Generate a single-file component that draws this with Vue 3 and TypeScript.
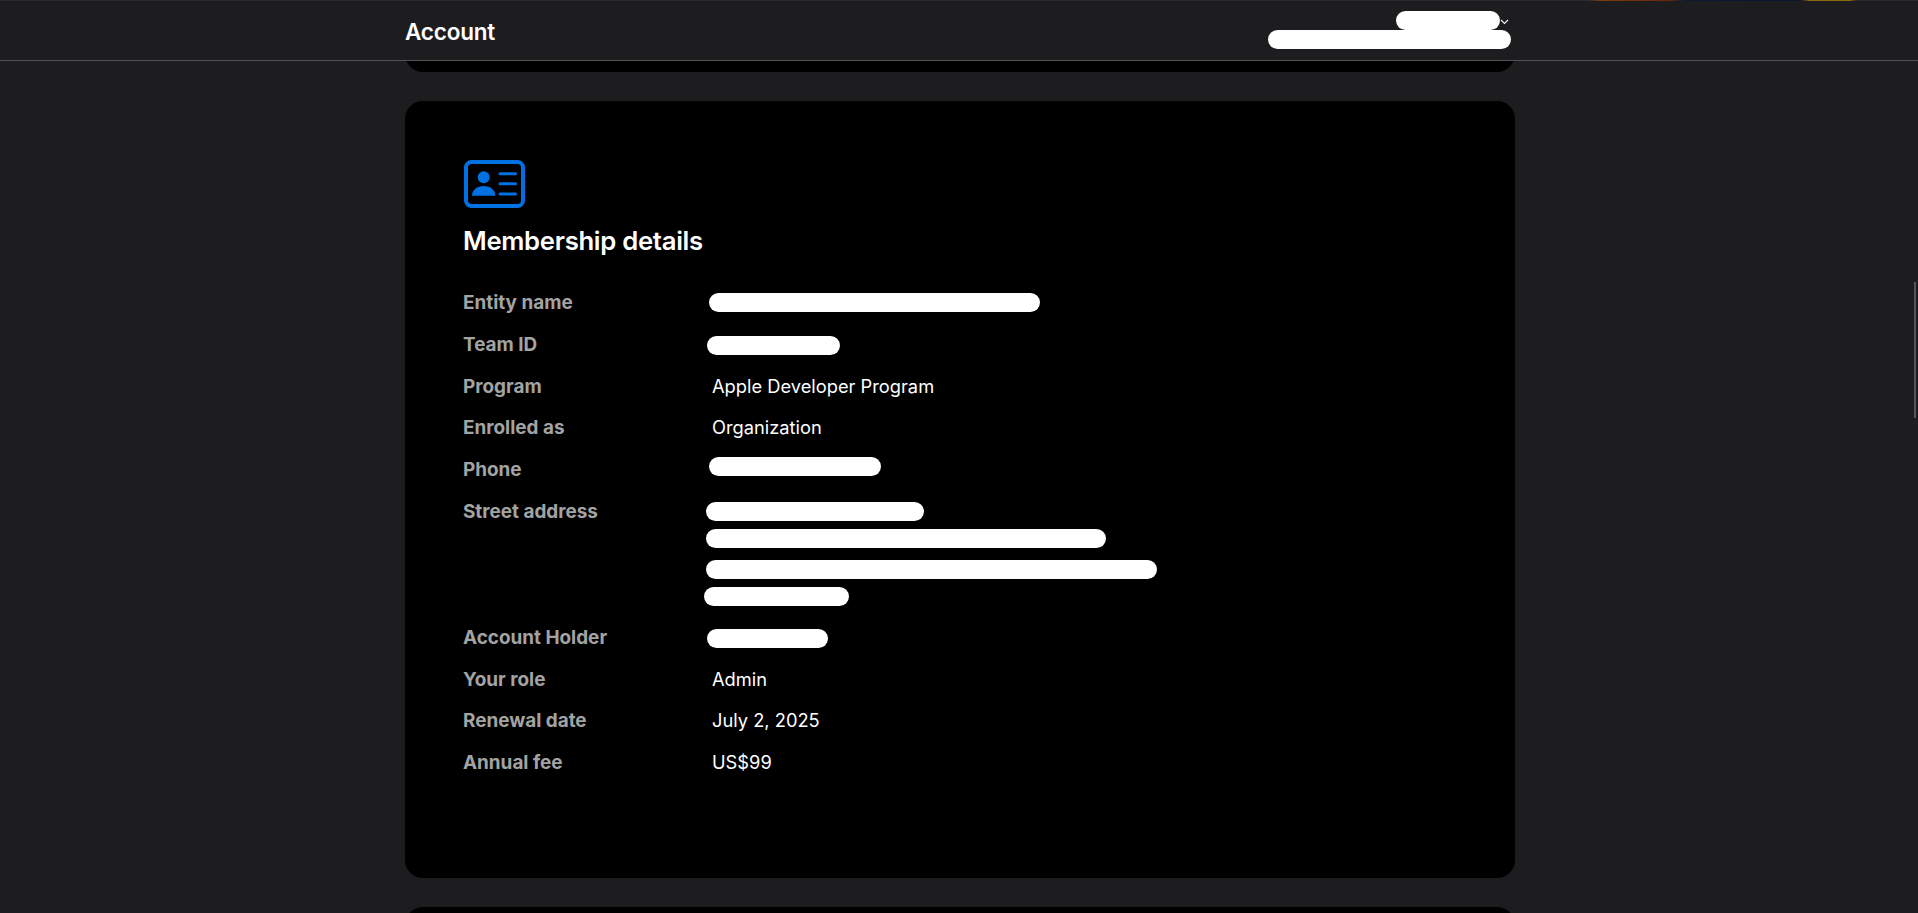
<script setup lang="ts">
interface Pill {
  left: number;
  width: number;
  top: number;
}

interface Row {
  label: string;
  value?: string;
  pills?: Pill[]; // redacted values
}

const rows: Row[] = [
  { label: 'Entity name', pills: [{ left: -3, width: 331, top: 3 }] },
  { label: 'Team ID', pills: [{ left: -5, width: 133, top: 4 }] },
  { label: 'Program', value: 'Apple Developer Program' },
  { label: 'Enrolled as', value: 'Organization' },
  { label: 'Phone', pills: [{ left: -3, width: 172, top: 0 }] },
  {
    label: 'Street address',
    pills: [
      { left: -6, width: 218, top: 3 },
      { left: -6, width: 400, top: 8 },
      { left: -6, width: 451, top: 12 },
      { left: -8, width: 145, top: 8 },
    ],
  },
  { label: 'Account Holder', pills: [{ left: -5, width: 121, top: 4 }] },
  { label: 'Your role', value: 'Admin' },
  { label: 'Renewal date', value: 'July 2, 2025' },
  { label: 'Annual fee', value: 'US$99' },
];
</script>

<template>
  <div class="page">
    <div class="top-strip"></div>
    <header class="header">
      <div class="header-inner">
        <h1 class="title">Account</h1>
        <div class="user">
          <div class="user-name">
            <span class="pill name-pill"></span>
            <svg class="chevron" width="9" height="6" viewBox="0 0 9 6" fill="none">
              <path d="M1 1l3.500 3.500L8 1" stroke="#f5f5f7" stroke-width="1.1" />
            </svg>
          </div>
          <span class="pill team-pill"></span>
        </div>
      </div>
    </header>

    <main class="content">
      <div class="sliver sliver-top"><div class="card"></div></div>

      <section class="card details">
        <svg class="icon" width="61" height="48" viewBox="0 0 61 48" fill="none">
          <rect x="2" y="2" width="57" height="44" rx="5.500" stroke="#0071e3" stroke-width="4" />
          <circle cx="19.700" cy="17.300" r="6" fill="#0071e3" />
          <path d="M8 35.700c0-5.500 5-9.700 11.700-9.700s11.600 4.200 11.600 9.700z" fill="#0071e3" />
          <path d="M36 13.700h15.500M36 23.700h15.500M36 34h15.500" stroke="#0071e3" stroke-width="3" stroke-linecap="round" />
        </svg>
        <h2 class="heading">Membership details</h2>

        <dl class="rows">
          <div v-for="row in rows" :key="row.label" class="row">
            <dt class="label">{{ row.label }}</dt>
            <dd class="value">
              <template v-if="row.value">{{ row.value }}</template>
              <div v-else class="pills">
                <span
                  v-for="(pill, i) in row.pills"
                  :key="i"
                  class="pill"
                  :style="{ marginLeft: pill.left + 'px', width: pill.width + 'px', marginTop: pill.top + 'px' }"
                ></span>
              </div>
            </dd>
          </div>
        </dl>
      </section>

      <div class="sliver sliver-bottom"><div class="card"></div></div>
    </main>

    <div class="scroll-thumb"></div>
  </div>
</template>

<style>
html,
body {
  margin: 0;
  height: 913px;
  overflow: hidden;
  background: #1d1d1f;
}
</style>

<style scoped>
.page {
  height: 913px;
  overflow: hidden;
  position: relative;
  background: #1d1d1f;
  color: #f5f5f7;
  font-family: Inter, "Liberation Sans", sans-serif;
}

.top-strip {
  height: 1px;
  background: linear-gradient(
    to right,
    #2a2a2c 1588px,
    #7a3d0c 1600px,
    #6b2410 1670px,
    #0c1a33 1685px,
    #0c1433 1800px,
    #8a6a10 1810px,
    #8a6a10 1850px,
    #2a2a2c 1856px
  );
}

.header {
  height: 59px;
  border-bottom: 1px solid #515154;
}

.header-inner {
  width: 1110px;
  margin-left: 405px;
  height: 100%;
  display: flex;
  align-items: center;
  justify-content: space-between;
}

.title {
  margin: 0;
  font-size: 22.500px;
  font-weight: 600;
  letter-spacing: -0.2px;
  color: #fff;
  position: relative;
  top: 1px;
}

.user {
  display: flex;
  flex-direction: column;
  align-items: flex-end;
  padding-bottom: 1px;
  margin-right: 4px;
}

.user-name {
  display: flex;
  align-items: center;
  margin-right: 11px;
}

.pill {
  display: block;
  height: 19px;
  border-radius: 10px;
  background: #fff;
}

.name-pill {
  width: 104px;
}

.team-pill {
  width: 243px;
}

.chevron {
  margin-right: -9px;
  margin-top: 3px;
}

.content {
  width: 1110px;
  margin-left: 405px;
  display: flex;
  flex-direction: column;
  gap: 29px;
}

.card {
  background: #000;
  border-radius: 18px;
}

.sliver {
  overflow: hidden;
  flex: none;
}

.sliver .card {
  height: 60px;
}

.sliver-top {
  height: 11px;
}

.sliver-top .card {
  margin-top: -49px;
}

.sliver-bottom {
  height: 6px;
}

.details {
  height: 777px;
  box-sizing: border-box;
  padding: 59px 59px 0;
  flex: none;
}

.icon {
  display: block;
}

.heading {
  margin: 18px 0 0 -1px;
  font-size: 25.700px;
  line-height: 30px;
  font-weight: 600;
  letter-spacing: -0.3px;
  color: #fff;
}

.rows {
  margin: 34px 0 0 -1px;
}

.row {
  display: flex;
  min-height: 25px;
  padding-bottom: 16.800px;
  font-size: 18.300px;
  line-height: 25px;
}

.label {
  width: 249px;
  flex: none;
  font-size: 18.900px;
  font-weight: 700;
  color: #a3a3a3;
}

.value {
  margin: 0;
  color: #fff;
}

.pills .pill:last-child {
  margin-bottom: 2px;
}

.scroll-thumb {
  position: absolute;
  right: 2px;
  top: 282px;
  width: 2px;
  height: 136px;
  background: #555;
}
</style>
